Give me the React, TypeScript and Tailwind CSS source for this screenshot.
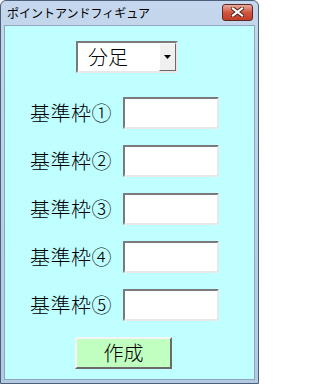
import React from "react";

const rows = ["基準枠①", "基準枠②", "基準枠③", "基準枠④", "基準枠⑤"];

export default function App() {
  const jp = { fontFamily: '"Noto Sans CJK JP", "Noto Sans", sans-serif' };

  return (
    <div
      className="w-[259px] h-[384px] flex flex-col bg-gradient-to-b from-[#c4d7ec] to-[#b3c9e2] border border-[#4a5f78] rounded-t-[6px] px-[3px] pb-[3px]"
      style={jp}
    >
      {/* TITLE BAR */}
      <div className="h-[24px] flex items-center justify-between pl-[3px] pr-[2px]">
        <span className="text-[12px] text-black leading-none">ポイントアンドフィギュア</span>
        <button className="w-[31px] h-[17px] mt-[-2px] rounded-[3px] border border-[#5b2a22] bg-gradient-to-b from-[#e9a99b] via-[#d2553f] to-[#c23d25] flex items-center justify-center">
          <svg width="13" height="10" viewBox="0 0 13 10">
            <path d="M2 1.5 L11 8.5 M11 1.5 L2 8.5" stroke="#4a2018" strokeWidth="4" strokeLinecap="square" />
            <path d="M2 1.5 L11 8.5 M11 1.5 L2 8.5" stroke="#ffffff" strokeWidth="2.2" strokeLinecap="square" />
          </svg>
        </button>
      </div>

      {/* CLIENT */}
      <div className="flex-1 bg-[#c0ffff] border border-[#8fa6bf] flex flex-col items-start">
        <div className="ml-[71px] mt-[15px] w-[102px] h-[32px] flex bg-white border-2 border-t-[#7a7a7a] border-l-[#7a7a7a] border-r-[#e8e8e8] border-b-[#e8e8e8]">
          <span className="flex-1 pl-[10px] text-[20px] font-light leading-[28px] text-black">分足</span>
          <div className="w-[17px] h-full bg-[#f0f0f0] border border-t-white border-l-white border-r-[#696969] border-b-[#696969] flex items-center justify-center">
            <svg width="7" height="4" viewBox="0 0 7 4">
              <path d="M0 0 H7 L3.5 4 Z" fill="#000" />
            </svg>
          </div>
        </div>

        <div className="mt-[24px] flex flex-col gap-[16px]">
          {rows.map((r) => (
            <div key={r} className="flex items-center">
              <span className="ml-[25px] w-[93px] text-[20px] font-light leading-none text-black tracking-[0.5px]">{r}</span>
              <div className="w-[96px] h-[32px] bg-white border-2 border-t-[#7a7a7a] border-l-[#7a7a7a] border-r-[#e8e8e8] border-b-[#e8e8e8]" />
            </div>
          ))}
        </div>

        <button className="ml-[70px] mt-[16px] w-[97px] h-[32px] bg-[#c0ffc0] border-2 border-t-[#f4f4f4] border-l-[#f4f4f4] border-r-[#6a6a6a] border-b-[#6a6a6a] text-[20px] font-light leading-none text-black flex items-center justify-center">
          作成
        </button>
      </div>
    </div>
  );
}
